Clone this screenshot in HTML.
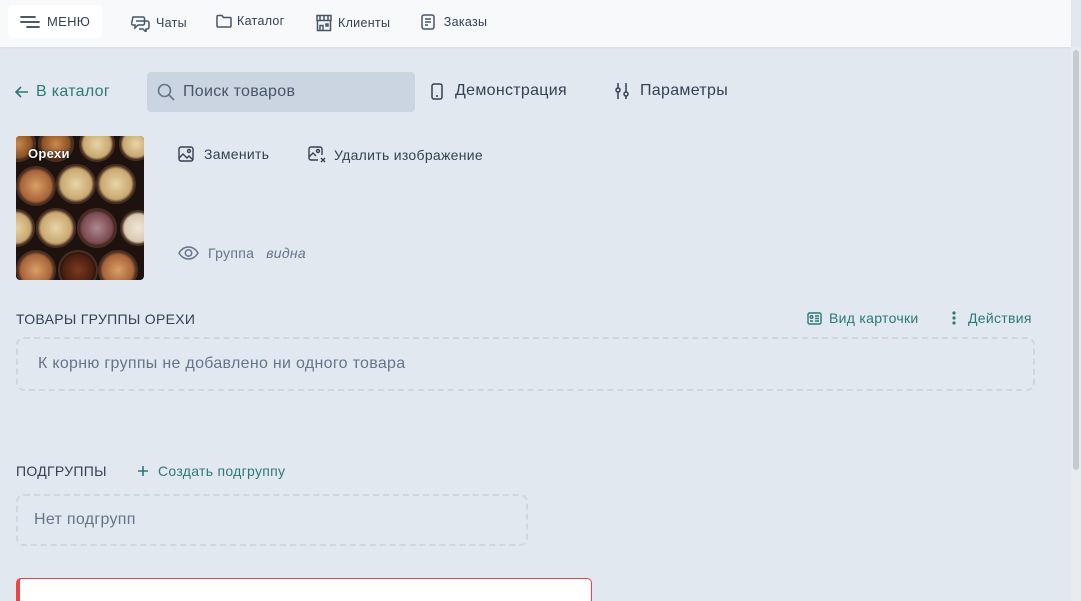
<!DOCTYPE html>
<html><head><meta charset="utf-8"><style>
*{box-sizing:border-box;margin:0;padding:0}
html,body{width:1081px;height:601px;overflow:hidden}
body{background:#e2e8f0;font-family:"Liberation Sans",sans-serif;position:relative;color:#334155;letter-spacing:.3px}
.top{position:absolute;left:0;top:0;width:1071px;height:47px;background:#f8f9fb;box-shadow:0 1px 2px rgba(0,0,0,.05)}
.menu{position:absolute;left:8px;top:5px;width:94px;height:33px;background:#fff;border-radius:4px;font-size:13px;color:#334155}
.ti{position:absolute;top:14px;font-size:12.5px;color:#334155;display:flex;align-items:center;gap:5px}
.abs{position:absolute}
.teal{color:#2b7a78}
svg{display:block}
.sb{position:absolute;left:1071px;top:47px;width:10px;height:554px;background:#e9ecef}
.thumb{position:absolute;left:1073px;top:50px;width:6px;height:420px;background:#c5cbd3;border-radius:3px}
.dash{position:absolute;border:2px dashed #cfd6e0;border-radius:8px}
</style></head><body>
<div class="top">
 <div class="menu">
  <svg class="abs" style="left:12px;top:11px" width="20" height="12" viewBox="0 0 20 12"><path d="M1 1h14M1 6h18M7 11h12" stroke="#334155" stroke-width="1.8" stroke-linecap="round"/></svg>
  <span class="abs" style="left:39px;top:9px">МЕНЮ</span>
 </div>
 <div class="ti" style="left:131px"><svg width="20" height="18" viewBox="0 0 20 18" fill="none" stroke="#475569" stroke-width="1.5"><path d="M2 3h10a1.5 1.5 0 0 1 1.5 1.5v5a1.5 1.5 0 0 1-1.5 1.5H7l-3 3v-3H2A1.5 1.5 0 0 1 .5 9.5z"/><path d="M5 7h11a2 2 0 0 1 2 2v4a2 2 0 0 1-2 2h-1v3l-3-3H8"/></svg>Чаты</div>
 <div class="ti" style="left:216px"><svg width="16" height="14" viewBox="0 0 16 14" fill="none" stroke="#475569" stroke-width="1.5"><path d="M1 2.5a1 1 0 0 1 1-1h4l1.5 2H14a1 1 0 0 1 1 1V12a1 1 0 0 1-1 1H2a1 1 0 0 1-1-1z"/></svg>Каталог</div>
 <div class="ti" style="left:315px"><svg width="18" height="18" viewBox="0 0 18 18" fill="none" stroke="#475569" stroke-width="1.5"><path d="M2 1.5h14v5H2zM5 1.5v5M9 1.5v5M13 1.5v5M2.5 6.5v10h13v-10M5 16.5v-5h3v5M11 10h2v2h-2z"/></svg>Клиенты</div>
 <div class="ti" style="left:421px"><svg width="14" height="16" viewBox="0 0 14 16" fill="none" stroke="#475569" stroke-width="1.5"><rect x="1" y="1" width="12" height="14" rx="2"/><path d="M4 5h6M4 8h6M4 11h3"/></svg>&nbsp;Заказы</div>
</div>
<div class="sb"></div><div class="thumb"></div>

<div class="abs teal" style="left:15px;top:83px;font-size:16px;display:flex;align-items:center;gap:7px"><svg width="14" height="12" viewBox="0 0 14 12" fill="none" stroke="#2b7a78" stroke-width="1.6"><path d="M13 6H1M6 1L1 6l5 5"/></svg>В каталог</div>
<div class="abs" style="left:147px;top:72px;width:268px;height:40px;background:#cbd5e1;border-radius:4px">
 <svg class="abs" style="left:10px;top:11px" width="18" height="18" viewBox="0 0 18 18" fill="none" stroke="#64748b" stroke-width="1.6"><circle cx="7.5" cy="7.5" r="6"/><path d="M12 12l5 5"/></svg>
 <span class="abs" style="left:36px;top:11px;font-size:16px;color:#475569">Поиск товаров</span>
</div>
<div class="abs" style="left:431px;top:82px;font-size:16px;color:#334155;display:flex;align-items:center;gap:12px"><svg width="12" height="17" viewBox="0 0 12 17" fill="none" stroke="#334155" stroke-width="1.5"><rect x="1" y="1" width="10" height="15" rx="2"/><path d="M5 13h2"/></svg>Демонстрация</div>
<div class="abs" style="left:614px;top:82px;font-size:16px;color:#334155;display:flex;align-items:center;gap:10px"><svg width="16" height="18" viewBox="0 0 16 18" fill="none" stroke="#334155" stroke-width="1.5"><path d="M4 1v5M4 10v7M12 1v9M12 14v3"/><circle cx="4" cy="8" r="2"/><circle cx="12" cy="12" r="2"/></svg>Параметры</div>

<div class="abs" style="left:16px;top:136px;width:128px;height:144px;border-radius:4px;overflow:hidden;background:#1e120e">
<svg width="128" height="144" viewBox="0 0 128 144">
<defs>
<radialGradient id="a"><stop offset="0" stop-color="#d9a066"/><stop offset=".8" stop-color="#a8643a"/><stop offset="1" stop-color="#3a2016"/></radialGradient>
<radialGradient id="b"><stop offset="0" stop-color="#e8d4a8"/><stop offset=".8" stop-color="#c9a870"/><stop offset="1" stop-color="#3a2016"/></radialGradient>
<radialGradient id="c"><stop offset="0" stop-color="#c98a4a"/><stop offset=".8" stop-color="#8a5026"/><stop offset="1" stop-color="#2a1610"/></radialGradient>
<radialGradient id="d"><stop offset="0" stop-color="#b08890"/><stop offset=".8" stop-color="#7a4a50"/><stop offset="1" stop-color="#2a1610"/></radialGradient>
<radialGradient id="e"><stop offset="0" stop-color="#f0e6d8"/><stop offset=".8" stop-color="#d8c8b0"/><stop offset="1" stop-color="#3a2016"/></radialGradient>
<radialGradient id="f"><stop offset="0" stop-color="#7a3a20"/><stop offset=".8" stop-color="#4a1e10"/><stop offset="1" stop-color="#1e100a"/></radialGradient>
</defs>
<g stroke="#4a3024" stroke-width="2">
<circle cx="2" cy="8" r="17" fill="url(#c)"/><circle cx="40" cy="8" r="17" fill="url(#c)"/><circle cx="81" cy="8" r="17" fill="url(#b)"/><circle cx="120" cy="8" r="16" fill="url(#b)"/>
<circle cx="20" cy="50" r="19" fill="url(#a)"/><circle cx="60" cy="48" r="19" fill="url(#b)"/><circle cx="100" cy="48" r="19" fill="url(#b)"/>
<circle cx="0" cy="92" r="18" fill="url(#b)"/><circle cx="40" cy="92" r="19" fill="url(#b)"/><circle cx="81" cy="92" r="19" fill="url(#d)"/><circle cx="122" cy="92" r="17" fill="url(#e)"/>
<circle cx="20" cy="134" r="19" fill="url(#a)"/><circle cx="62" cy="134" r="19" fill="url(#f)"/><circle cx="102" cy="134" r="19" fill="url(#a)"/>
</g>
</svg>
<span class="abs" style="left:12px;top:10px;color:#fff;font-size:13px;font-weight:bold;text-shadow:0 0 2px #000">Орехи</span>
</div>
<div class="abs" style="left:178px;top:146px;font-size:14px;color:#334155;display:flex;align-items:center;gap:10px"><svg width="16" height="16" viewBox="0 0 16 16" fill="none" stroke="#334155" stroke-width="1.4"><rect x="1" y="1" width="14" height="14" rx="2"/><path d="M1 12l4-4 4 4 2-2 4 4"/><circle cx="11" cy="5" r="1.5"/></svg>Заменить</div>
<div class="abs" style="left:308px;top:146px;font-size:14px;color:#334155;display:flex;align-items:center;gap:8px"><svg width="18" height="17" viewBox="0 0 18 17" fill="none" stroke="#334155" stroke-width="1.4"><path d="M10 14H3a2 2 0 0 1-2-2V3a2 2 0 0 1 2-2h9a2 2 0 0 1 2 2v6"/><path d="M1 11l4-4 3 3"/><circle cx="10" cy="5" r="1.5"/><path d="M13 12l4 4M17 12l-4 4"/></svg>Удалить изображение</div>
<div class="abs" style="left:178px;top:245px;font-size:14px;color:#64748b;display:flex;align-items:center;gap:9px"><svg width="21" height="14" viewBox="0 0 21 14" fill="none" stroke="#64748b" stroke-width="1.5"><path d="M1 7C4 2 8 1 10.5 1S17 2 20 7c-3 5-7 6-9.5 6S4 12 1 7z"/><circle cx="10.5" cy="7" r="3.2"/></svg>Группа <i style="margin-left:3px">видна</i></div>

<div class="abs" style="left:16px;top:311px;font-size:14px;color:#334155">ТОВАРЫ ГРУППЫ ОРЕХИ</div>
<div class="abs teal" style="left:807px;top:310px;font-size:14px;display:flex;align-items:center;gap:7px"><svg width="15" height="13" viewBox="0 0 15 13" fill="none" stroke="#2b7a78" stroke-width="1.4"><rect x="1" y="1" width="13" height="11" rx="1.5"/><circle cx="4.5" cy="5" r="1.3"/><path d="M3 9h3M8 4h4M8 6.5h4M8 9h4"/></svg>Вид карточки</div>
<div class="abs teal" style="left:952px;top:310px;font-size:14px;display:flex;align-items:center;gap:12px"><svg width="4" height="14" viewBox="0 0 4 14" fill="#2b7a78"><circle cx="2" cy="2" r="1.6"/><circle cx="2" cy="7" r="1.6"/><circle cx="2" cy="12" r="1.6"/></svg>Действия</div>
<div class="dash" style="left:16px;top:337px;width:1019px;height:54px"></div>
<div class="abs" style="left:38px;top:355px;font-size:16px;color:#64748b">К корню группы не добавлено ни одного товара</div>

<div class="abs" style="left:16px;top:463px;font-size:14px;color:#334155">ПОДГРУППЫ</div>
<div class="abs teal" style="left:137px;top:463px;font-size:14px;display:flex;align-items:center;gap:9px"><svg width="12" height="12" viewBox="0 0 12 12" stroke="#2b7a78" stroke-width="1.6"><path d="M6 1v10M1 6h10"/></svg>Создать подгруппу</div>
<div class="dash" style="left:16px;top:494px;width:512px;height:52px"></div>
<div class="abs" style="left:34px;top:511px;font-size:16px;color:#64748b">Нет подгрупп</div>

<div class="abs" style="left:16px;top:578px;width:576px;height:40px;background:#fff;border:1px solid #ef4444;border-left:4px solid #ef4444;border-radius:5px"></div>
</body></html>
